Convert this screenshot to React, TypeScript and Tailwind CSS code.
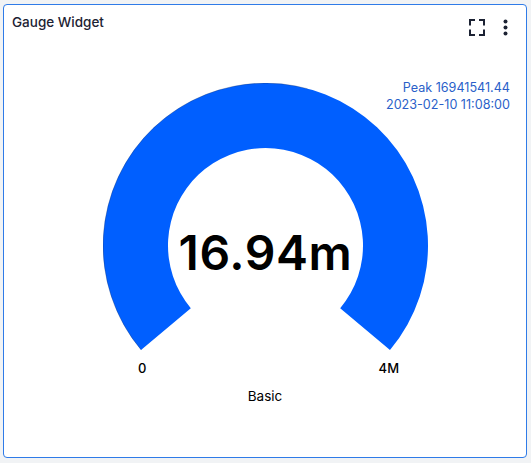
const FONT = "font-['Inter','Noto_Sans',sans-serif]";

// arc band, 220 degrees, centre (162.5,162.5) in svg coords
function polar(r: number, deg: number) {
  const a = ((deg - 90) * Math.PI) / 180;
  return `${(162.5 + r * Math.cos(a)).toFixed(2)} ${(162.5 + r * Math.sin(a)).toFixed(2)}`;
}

function Gauge() {
  const outer = 162.5;
  const inner = 97.5;
  const d = `M ${polar(outer, -130)} A ${outer} ${outer} 0 1 1 ${polar(outer, 130)} L ${polar(inner, 130)} A ${inner} ${inner} 0 1 0 ${polar(inner, -130)} Z`;
  const edge = `M ${polar(outer - 0.2, -130)} A ${outer - 0.2} ${outer - 0.2} 0 0 1 ${polar(outer - 0.2, 15)}`;
  return (
    <svg width="325" height="270" viewBox="0 0 325 270" className="block">
      <path d={d} fill="#005fff" />
      <path d={edge} fill="none" stroke="#24324f" strokeOpacity="0.6" strokeWidth="0.5" />
    </svg>
  );
}

export default function App() {
  return (
    <div className={`h-[463px] w-[531px] bg-[#f1f3f5] pl-[3px] pr-[4px] pt-[4px] pb-[5px] ${FONT}`}>
      <div className="relative flex h-full flex-col rounded border border-[#2f7be8] bg-white">
        {/* Header */}
        <div className="flex items-start justify-between pl-2 pr-[18px] pt-[9px]">
          <h1 className="text-[13.5px] leading-4 font-medium text-[#1c2233]">Gauge Widget</h1>
          <div className="flex items-center gap-[18px] pt-[5px]">
            <svg width="16" height="17" viewBox="0 0 16 17" fill="none" stroke="#1c2233" strokeWidth="2">
              <path d="M1 6.5V1h5M10 1h5v5.5M15 10.5V16h-5M6 16H1v-5.5" />
            </svg>
            <svg width="5" height="17" viewBox="0 0 5 17" fill="#1c2233">
              <circle cx="2.5" cy="2.5" r="2" />
              <circle cx="2.5" cy="8.5" r="2" />
              <circle cx="2.5" cy="14.5" r="2" />
            </svg>
          </div>
        </div>

        {/* Peak */}
        <div className="absolute right-[16px] top-[74px] text-right text-[12.6px] leading-[17px] text-[#2a5fc9]">
          <p>Peak 16941541.44</p>
          <p>2023-02-10 11:08:00</p>
        </div>

        {/* Chart */}
        <div className="ml-[99px] mt-[47px] w-[325px]">
          <div className="relative">
            <Gauge />
            <div className="absolute left-0 right-0 top-[142px] text-center text-[48px] leading-[56px] font-semibold tracking-[0.6px] text-black">
              16.94m
            </div>
          </div>
        </div>
        <div className="ml-[134px] mr-[127px] mt-[7px] flex justify-between text-[13px] leading-4 font-medium text-black">
          <span>0</span>
          <span>4M</span>
        </div>
        <p className="mt-3 text-center text-[13.5px] leading-4 text-black">Basic</p>
      </div>
    </div>
  );
}
